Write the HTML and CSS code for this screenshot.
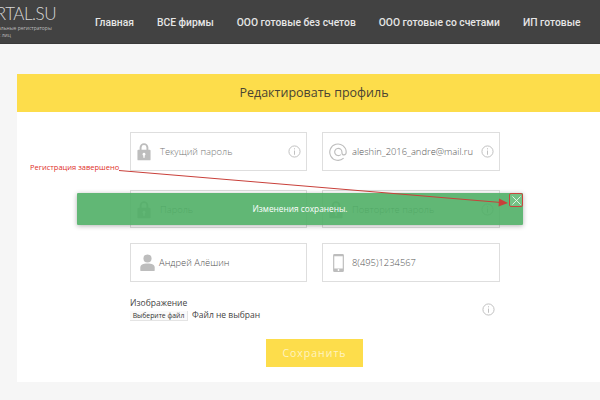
FILE: index.html
```html
<!DOCTYPE html>
<html lang="ru">
<head>
<meta charset="utf-8">
<title>Редактировать профиль</title>
<link rel="stylesheet" href="styles.css">
</head>
<body>
<header class="topbar">
  <div class="logo">
    <div class="logo-name"><span>ORTAL.SU</span></div>
    <div class="logo-sub">альные регистраторы<br>с лиц</div>
  </div>
  <nav class="nav">
    <a>Главная</a>
    <a>ВСЕ фирмы</a>
    <a>ООО готовые без счетов</a>
    <a>ООО готовые со счетами</a>
    <a>ИП готовые</a>
  </nav>
</header>
<main class="card">
  <h1 class="card-title">Редактировать профиль</h1>
  <form class="form">
    <div class="fields">
      <div class="field">
        <svg class="ico" viewBox="0 0 16 20"><path class="fill" fill-rule="evenodd" d="M3 8V5.5a5 5 0 0 1 10 0V8h1.500a1 1 0 0 1 1 1v10a1 1 0 0 1-1 1h-13a1 1 0 0 1-1-1V9a1 1 0 0 1 1-1zm2.200 0h5.600V5.500a2.800 2.800 0 0 0-5.600 0zM8 11.500a1.700 1.700 0 0 0-.8 3.200V17h1.600v-2.300A1.700 1.700 0 0 0 8 11.500z"/></svg>
        <span class="placeholder">Текущий пароль</span>
        <svg class="info" viewBox="0 0 14 14"><circle cx="7" cy="7" r="6"/><path d="M7 6v4.500M7 3.500v1.200"/></svg>
      </div>
      <div class="field">
        <svg class="ico ico-at" viewBox="0 0 16 16"><path class="line" d="M13 13.500A7.300 7.300 0 1 1 15.300 8c0 1.700-.9 2.600-2 2.600s-1.800-.8-1.800-2V8a3.200 3.200 0 1 0-1 2.300"/></svg>
        <span class="value">aleshin_2016_andre@mail.ru</span>
        <svg class="info" viewBox="0 0 14 14"><circle cx="7" cy="7" r="6"/><path d="M7 6v4.500M7 3.500v1.200"/></svg>
      </div>
      <div class="field field-mid">
        <svg class="ico" viewBox="0 0 16 20"><path class="fill" fill-rule="evenodd" d="M3 8V5.5a5 5 0 0 1 10 0V8h1.500a1 1 0 0 1 1 1v10a1 1 0 0 1-1 1h-13a1 1 0 0 1-1-1V9a1 1 0 0 1 1-1zm2.200 0h5.600V5.500a2.800 2.800 0 0 0-5.600 0zM8 11.500a1.700 1.700 0 0 0-.8 3.200V17h1.600v-2.300A1.700 1.700 0 0 0 8 11.500z"/></svg>
        <span class="placeholder">Пароль</span>
      </div>
      <div class="field field-mid">
        <svg class="ico" viewBox="0 0 16 20"><path class="fill" fill-rule="evenodd" d="M3 8V5.5a5 5 0 0 1 10 0V8h1.500a1 1 0 0 1 1 1v10a1 1 0 0 1-1 1h-13a1 1 0 0 1-1-1V9a1 1 0 0 1 1-1zm2.200 0h5.600V5.500a2.800 2.800 0 0 0-5.600 0zM8 11.500a1.700 1.700 0 0 0-.8 3.200V17h1.600v-2.300A1.700 1.700 0 0 0 8 11.500z"/></svg>
        <span class="placeholder">Повторите пароль</span>
        <svg class="info" viewBox="0 0 14 14"><circle cx="7" cy="7" r="6"/><path d="M7 6v4.500M7 3.500v1.200"/></svg>
      </div>
      <div class="field">
        <svg class="ico ico-user" viewBox="0 0 16 20"><circle class="fill" cx="8" cy="5" r="4.500"/><path class="fill" d="M1 19a1 1 0 0 1-1-1v-3c0-3 3-4.500 8-4.500s8 1.500 8 4.500v3a1 1 0 0 1-1 1z"/></svg>
        <span class="value">Андрей Алёшин</span>
      </div>
      <div class="field">
        <svg class="ico ico-phone" viewBox="0 0 12 20"><path class="fill" fill-rule="evenodd" d="M1.500 0h9A1.500 1.500 0 0 1 12 1.500v17a1.500 1.500 0 0 1-1.500 1.500h-9A1.500 1.500 0 0 1 0 18.500v-17A1.500 1.500 0 0 1 1.500 0zM1.300 2.500v13.500h9.400V2.500zM6 16.800a1 1 0 1 0 0 2 1 1 0 0 0 0-2z"/></svg>
        <span class="value">8(495)1234567</span>
      </div>
    </div>
    <div class="upload">
      <div class="upload-main">
        <div class="upload-label">Изображение</div>
        <div class="upload-row">
          <span class="file-btn">Выберите файл</span>
          <span class="file-name">Файл не выбран</span>
        </div>
      </div>
      <svg class="info info-upload" viewBox="0 0 14 14"><circle cx="7" cy="7" r="6"/><path d="M7 6v4.500M7 3.500v1.200"/></svg>
    </div>
    <div class="actions"><span class="save">Сохранить</span></div>
  </form>
</main>
<div class="toast">
  <span>Изменения сохранены.</span>
  <span class="toast-close">
    <svg viewBox="0 0 10 10"><path d="M0.500 0.500l9 9M9.500 0.500l-9 9"/></svg>
  </span>
</div>
<div class="note">Регистрация завершено</div>
<svg class="arrow" viewBox="0 0 600 400">
  <path class="arrow-line" d="M119 170.500L501 202.500"/>
  <path class="arrow-head" d="M508 203L499 198.500L498.500 206.500z"/>
</svg>
</body>
</html>
```
FILE: styles.css
```css
* { box-sizing: border-box; }
html, body { margin: 0; height: 400px; overflow: hidden; }
body {
  position: relative;
  background: #f6f6f6;
  font-family: "Open Sans", sans-serif;
  color: #555;
}
.topbar {
  height: 44px;
  background: #424242;
  border-bottom: 1px solid #3a3a3a;
  display: flex;
  align-items: center;
  overflow: hidden;
}
.logo {
  width: 95px;
  flex: none;
  margin-top: -1px;
  white-space: nowrap;
  color: #d8d8d8;
}
.logo-name {
  display: flex;
  justify-content: flex-end;
  width: 56px;
  font-family: Lato, sans-serif;
  font-size: 17px;
  font-weight: 300;
  line-height: 20px;
  letter-spacing: -.5px;
}
.logo-sub {
  font-size: 5px;
  line-height: 7px;
  margin-top: 1px;
  margin-left: -2px;
  color: #bdbdbd;
}
.nav {
  display: flex;
  gap: 23px;
  margin-top: 1px;
  font-family: Roboto, sans-serif;
  font-size: 10.300px;
  font-weight: 500;
  color: #e6e6e6;
  white-space: nowrap;
}
.card {
  margin: 30px -11px 0 17px;
  height: 308px;
  background: #fff;
}
.card-title {
  margin: 0;
  height: 38px;
  background: #fddd4b;
  font-size: 12.500px;
  line-height: 38px;
  font-weight: 400;
  text-align: center;
  color: #4a4433;
}
.form {
  padding: 20px 0 0 113px;
}
.fields {
  display: grid;
  grid-template-columns: 177px 178px;
  grid-template-rows: 39px 42px 39px;
  column-gap: 15px;
  row-gap: 15px;
}
.field {
  display: flex;
  align-items: center;
  border: 1px solid #dedede;
  background: #fff;
  padding: 0 5px 0 5px;
  font-size: 9.400px;
  font-weight: 300;
}
.field-mid { margin-top: 4px; height: 38px; }
.ico { width: 14px; height: 19px; flex: none; margin: 0 9px 0 1px; }
.ico-at { width: 18px; height: 18px; margin: 0 5px 0 1px; }
.ico-user { width: 15px; height: 18px; margin: 0 4px 0 4px; }
.ico-phone { width: 11px; height: 18px; margin: 0 8px 0 5px; }
.fill { fill: #bdbdbd; }
.line { fill: none; stroke: #bdbdbd; stroke-width: 1; }
.placeholder { color: #777; white-space: nowrap; }
.value { color: #555; white-space: nowrap; }
.info {
  width: 13px;
  height: 13px;
  margin-left: auto;
  flex: none;
  fill: none;
  stroke: #bcbcbc;
  stroke-width: 1;
}
.upload {
  display: flex;
  width: 365px;
  height: 39px;
  margin-top: 15px;
  align-items: flex-start;
}
.upload-main { font-size: 8.500px; color: #444; }
.upload-label { line-height: 12px; }
.upload-row { display: flex; align-items: center; gap: 4px; margin-top: 2px; }
.file-btn {
  width: 58px;
  height: 10px;
  line-height: 10px;
  background: #fafafa;
  border-bottom: 1px solid #e4e4e4;
  border-right: 1px solid #e4e4e4;
  font-size: 6.800px;
  text-align: center;
  color: #333;
  white-space: nowrap;
}
.file-name { line-height: 12px; margin-top: -2px; }
.info-upload { margin-top: 5.500px; }
.actions { width: 369px; display: flex; justify-content: center; margin-top: 3px; }
.save {
  width: 97px;
  height: 28px;
  line-height: 28px;
  background: #fddd4b;
  color: #fff3c0;
  font-size: 10.500px;
  letter-spacing: 1px;
  text-align: center;
}
.toast {
  position: absolute;
  left: 77px;
  top: 193px;
  width: 446px;
  height: 32px;
  background: rgba(78, 174, 100, .89);
  box-shadow: 0 1px 5px rgba(0,0,0,.3);
  border-radius: 1px;
  color: #fff;
  font-size: 8.300px;
  line-height: 32px;
  text-align: center;
}
.toast-close {
  position: absolute;
  right: 0;
  top: 0;
  width: 14px;
  height: 14px;
  border: 1.500px solid #c8453c;
  border-radius: 2px;
  background: #74c285;
  display: flex;
  align-items: center;
  justify-content: center;
}
.toast-close svg { width: 9px; height: 9px; fill: none; stroke: #eafbee; stroke-width: 1; }
.note {
  position: absolute;
  left: 30px;
  top: 162px;
  font-size: 7.500px;
  font-weight: 400;
  line-height: 11px;
  color: #e0302a;
  white-space: nowrap;
}
.arrow { position: absolute; left: 0; top: 0; width: 600px; height: 400px; pointer-events: none; }
.arrow-line { stroke: #c9403a; stroke-width: 1; fill: none; }
.arrow-head { fill: #c9403a; }
```
